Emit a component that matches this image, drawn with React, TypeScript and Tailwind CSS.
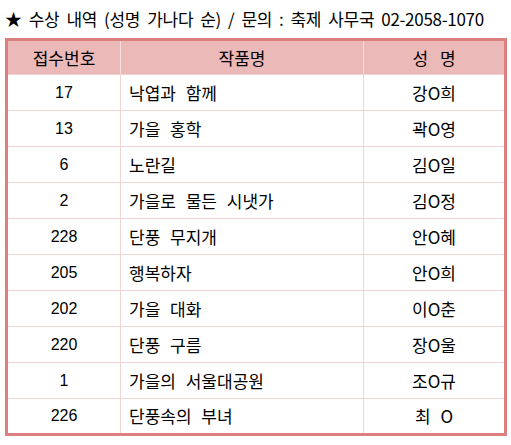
import React from 'react';

const rows = [
  { no: '17', title: '낙엽과 함께', name: '강O희' },
  { no: '13', title: '가을 홍학', name: '곽O영' },
  { no: '6', title: '노란길', name: '김O일' },
  { no: '2', title: '가을로 물든 시냇가', name: '김O정' },
  { no: '228', title: '단풍 무지개', name: '안O혜' },
  { no: '205', title: '행복하자', name: '안O희' },
  { no: '202', title: '가을 대화', name: '이O춘' },
  { no: '220', title: '단풍 구름', name: '장O울' },
  { no: '1', title: '가을의 서울대공원', name: '조O규' },
  { no: '226', title: '단풍속의 부녀', name: '최 O' },
];

export default function App() {
  return (
    <div className="w-[511px] h-[445px] bg-white text-black font-['Noto_Sans_CJK_KR','Noto_Sans',sans-serif]">
      <div className="h-[38px] pl-[5px] flex items-center text-[17px] [word-spacing:3.5px] tracking-[-0.3px]">
        ★ 수상 내역 (성명 가나다 순) / 문의 : 축제 사무국 02-2058-1070
      </div>
      <table className="ml-[5px] w-[502px] table-fixed border-collapse border-[3px] border-[#db7f81] text-[17px]">
        <colgroup>
          <col className="w-[114px]" />
          <col className="w-[243px]" />
          <col />
        </colgroup>
        <thead>
          <tr className="h-[35px] bg-[#ecb9b9]">
            <th className="font-normal border-r border-[#f6dede]">접수번호</th>
            <th className="font-normal border-r border-[#f6dede]">작품명</th>
            <th className="font-normal [word-spacing:8px]">성 명</th>
          </tr>
        </thead>
        <tbody>
          {rows.map((r, i) => (
            <tr key={i} className="h-[36px] border-t border-[#f2d3d3]">
              <td className="text-center border-r border-[#f2d3d3] font-['Liberation_Sans',sans-serif] text-[16px]">{r.no}</td>
              <td className="pl-[8px] border-r border-[#f2d3d3] [word-spacing:6px]">{r.title}</td>
              <td className="text-center [word-spacing:6px]">{r.name}</td>
            </tr>
          ))}
        </tbody>
      </table>
    </div>
  );
}
